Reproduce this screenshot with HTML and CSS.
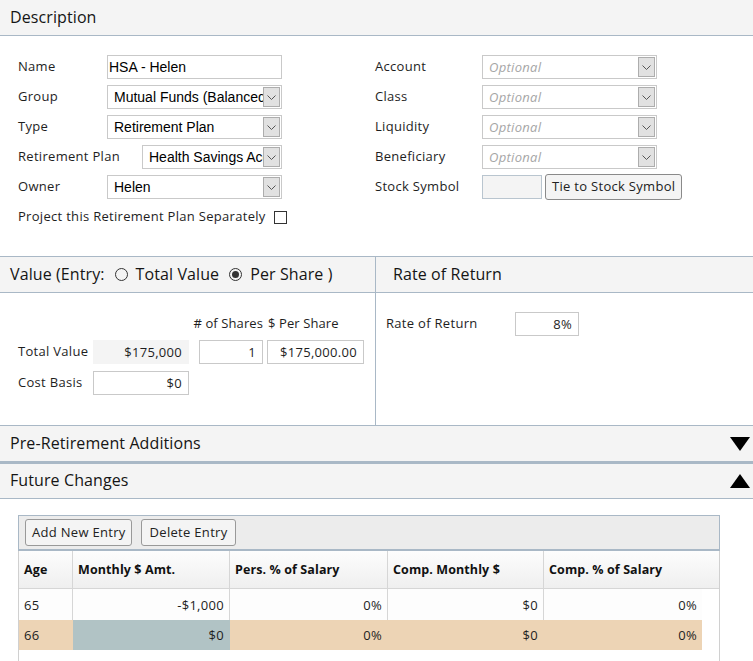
FILE: index.html
```html
<!DOCTYPE html>
<html>
<head>
<meta charset="utf-8">
<link rel="stylesheet" href="styles.css">
</head>
<body>
<div class="page">
  <div class="bar bar-first"><span class="bar-title">Description</span></div>
  <div class="desc">
    <div class="col col-left">
      <div class="row"><span class="lbl">Name</span><div class="field text-field">HSA - Helen</div></div>
      <div class="row"><span class="lbl">Group</span><div class="field select"><span class="val">Mutual Funds (Balanced)</span><span class="dd"><svg width="9" height="5" viewBox="0 0 9 5"><path d="M0.5 0.5 L4.5 4.5 L8.5 0.5" fill="none" stroke="#555" stroke-width="1"/></svg></span></div></div>
      <div class="row"><span class="lbl">Type</span><div class="field select"><span class="val">Retirement Plan</span><span class="dd"><svg width="9" height="5" viewBox="0 0 9 5"><path d="M0.5 0.5 L4.5 4.5 L8.5 0.5" fill="none" stroke="#555" stroke-width="1"/></svg></span></div></div>
      <div class="row row-fixed"><span class="lbl-plain">Retirement Plan</span><div class="field select select-short"><span class="val">Health Savings Account</span><span class="dd"><svg width="9" height="5" viewBox="0 0 9 5"><path d="M0.5 0.5 L4.5 4.5 L8.5 0.5" fill="none" stroke="#555" stroke-width="1"/></svg></span></div></div>
      <div class="row"><span class="lbl">Owner</span><div class="field select"><span class="val">Helen</span><span class="dd"><svg width="9" height="5" viewBox="0 0 9 5"><path d="M0.5 0.5 L4.5 4.5 L8.5 0.5" fill="none" stroke="#555" stroke-width="1"/></svg></span></div></div>
      <div class="row"><span class="lbl-plain lbl-check">Project this Retirement Plan Separately</span><span class="checkbox"></span></div>
    </div>
    <div class="col col-right">
      <div class="row"><span class="lbl lbl-r">Account</span><div class="field select"><span class="val placeholder">Optional</span><span class="dd"><svg width="9" height="5" viewBox="0 0 9 5"><path d="M0.5 0.5 L4.5 4.5 L8.5 0.5" fill="none" stroke="#555" stroke-width="1"/></svg></span></div></div>
      <div class="row"><span class="lbl lbl-r">Class</span><div class="field select"><span class="val placeholder">Optional</span><span class="dd"><svg width="9" height="5" viewBox="0 0 9 5"><path d="M0.5 0.5 L4.5 4.5 L8.5 0.5" fill="none" stroke="#555" stroke-width="1"/></svg></span></div></div>
      <div class="row"><span class="lbl lbl-r">Liquidity</span><div class="field select"><span class="val placeholder">Optional</span><span class="dd"><svg width="9" height="5" viewBox="0 0 9 5"><path d="M0.5 0.5 L4.5 4.5 L8.5 0.5" fill="none" stroke="#555" stroke-width="1"/></svg></span></div></div>
      <div class="row"><span class="lbl lbl-r">Beneficiary</span><div class="field select"><span class="val placeholder">Optional</span><span class="dd"><svg width="9" height="5" viewBox="0 0 9 5"><path d="M0.5 0.5 L4.5 4.5 L8.5 0.5" fill="none" stroke="#555" stroke-width="1"/></svg></span></div></div>
      <div class="row"><span class="lbl lbl-r">Stock Symbol</span><div class="symbol-box"></div><span class="btn btn-tie">Tie to Stock Symbol</span></div>
    </div>
  </div>

  <div class="split">
    <div class="pane pane-value">
      <div class="bar bar-top"><span class="bar-title"><span>Value (Entry:</span><span class="radio"></span><span>Total Value</span><span class="radio radio-on"></span><span>Per Share )</span></span></div>
      <div class="value-body">
        <span></span><span></span><span class="colhead ch-right"># of Shares</span><span class="colhead ch-left">$ Per Share</span>
        <span class="vlbl">Total Value</span><span class="num-box readonly">$175,000</span><span class="cell-r"><span class="num-box w64">1</span></span><span class="cell-r"><span class="num-box w97">$175,000.00</span></span>
        <span class="vlbl">Cost Basis</span><span class="num-box">$0</span><span></span><span></span>
      </div>
    </div>
    <div class="pane pane-rate">
      <div class="bar bar-top"><span class="bar-title bar-title-rate">Rate of Return</span></div>
      <div class="rate-body">
        <span class="rlbl">Rate of Return</span><span class="num-box w64">8%</span>
      </div>
    </div>
  </div>

  <div class="bar bar-pre"><span class="bar-title">Pre-Retirement Additions</span>
    <svg class="tri" width="20" height="14" viewBox="0 0 20 14"><polygon points="0,0 20,0 10,14" fill="#000"/></svg></div>
  <div class="bar bar-future"><span class="bar-title">Future Changes</span>
    <svg class="tri" width="20" height="14" viewBox="0 0 20 14"><polygon points="10,0 20,14 0,14" fill="#000"/></svg></div>

  <div class="grid-area">
    <div class="grid">
      <div class="toolbar"><span class="btn">Add New Entry</span><span class="btn btn-del">Delete Entry</span></div>
      <div class="ghead">
        <span class="gh">Age</span><span class="gh">Monthly $ Amt.</span><span class="gh">Pers. % of Salary</span><span class="gh">Comp. Monthly $</span><span class="gh gh-last">Comp. % of Salary</span>
      </div>
      <div class="grow">
        <span class="gc gc-l">65</span><span class="gc">-$1,000</span><span class="gc">0%</span><span class="gc">$0</span><span class="gc">0%</span>
      </div>
      <div class="grow grow-sel">
        <span class="gc gc-l">66</span><span class="gc gc-active">$0</span><span class="gc">0%</span><span class="gc">$0</span><span class="gc">0%</span>
      </div>
    </div>
  </div>
</div>
</body>
</html>
```
FILE: styles.css
```css
* { box-sizing: border-box; }
html, body { margin: 0; padding: 0; background: #fff; }
body {
  font-family: "Open Sans", Lato, sans-serif;
  font-size: 13px;
  letter-spacing: 0.3px;
  color: #1e1e1e;
}
.page { width: 753px; height: 661px; overflow: hidden; }

.bar {
  background: #f4f4f4;
  display: flex;
  align-items: center;
  justify-content: space-between;
  padding: 0 3px 0 10px;
  height: 36px;
  border-bottom: 1px solid #a9b8c6;
}
.bar-title {
  font-size: 16px;
  font-weight: 500;
  letter-spacing: 0.1px;
  color: #151515;
  display: inline-flex;
  align-items: center;
  white-space: nowrap;
  padding-bottom: 2px;
}
.bar-title-rate { padding-left: 7px; }

.desc { display: flex; padding: 19px 0 27px 0; }
.col { display: flex; flex-direction: column; gap: 6px; }
.col-left { width: 357px; margin-left: 18px; }
.col-right { flex: 1; }
.row { display: flex; align-items: center; height: 24px; }
.row-fixed { width: 264px; justify-content: space-between; }
.lbl, .lbl-plain { padding-bottom: 2px; }
.lbl { width: 89px; flex: none; }
.lbl-r { width: 107px; }
.lbl-check { margin-right: 8px; }

.field {
  height: 24px;
  width: 175px;
  border: 1px solid #c9c9c9;
  background: #fff;
  display: flex;
  align-items: center;
  font-family: "Liberation Sans", Arial, sans-serif;
  font-size: 14px;
  letter-spacing: 0;
  color: #000;
}
.text-field { padding-left: 1px; }
.select { padding: 1px 1px 1px 6px; }
.select-short { width: 140px; }
.val { flex: 1; overflow: hidden; white-space: nowrap; }
.placeholder { font-family: "Open Sans", sans-serif; font-style: italic; color: #a6a6a6; font-size: 13px; letter-spacing: 0.3px; }
.dd {
  flex: none;
  width: 17px;
  height: 100%;
  background: #e1e1e1;
  border: 1px solid #adadad;
  display: flex;
  align-items: center;
  justify-content: center;
}
.checkbox {
  width: 13px; height: 13px;
  border: 1px solid #333;
  background: #fff;
  display: inline-block;
}
.symbol-box {
  width: 60px; height: 24px;
  background: #f4f4f4;
  border: 1px solid #b9c5cf;
}
.btn {
  display: inline-flex;
  align-items: center;
  height: 27px;
  padding: 0 6px 2px;
  border: 1px solid #8a8a8a;
  border-radius: 3px;
  background: #f4f4f4;
  color: #222;
  font-size: 13px;
  white-space: nowrap;
}
.btn-tie { margin-left: 3px; height: 26px; }

.split { display: flex; border-top: 1px solid #a9b8c6; border-bottom: 1px solid #a9b8c6; }
.pane-value { width: 376px; border-right: 1px solid #a9b8c6; }
.pane-rate { flex: 1; }
.bar-top { height: 36px; }
.radio {
  width: 13px; height: 13px;
  border: 1px solid #333;
  border-radius: 50%;
  display: inline-flex;
  align-items: center;
  justify-content: center;
  margin: 2px 8px 0 10px;
  flex: none;
}
.radio-on::after {
  content: "";
  width: 7px; height: 7px;
  border-radius: 50%;
  background: #333;
}
.value-body {
  height: 132px;
  display: grid;
  grid-template-columns: 75px 96px 74px 101px;
  grid-template-rows: 19px 24px 24px;
  row-gap: 7px;
  align-items: center;
  padding: 21px 0 0 18px;
}
.colhead { white-space: nowrap; letter-spacing: 0.1px; padding-bottom: 2px; }
.vlbl, .rlbl { padding-bottom: 2px; }
.ch-right { text-align: right; }
.ch-left { padding-left: 5px; }
.num-box {
  height: 24px;
  border: 1px solid #c9c9c9;
  display: flex;
  align-items: center;
  justify-content: flex-end;
  padding-right: 6px;
  background: #fff;
}
.readonly { background: #f4f4f4; border-color: #f4f4f4; }
.cell-r { display: flex; justify-content: flex-end; }
.w64 { width: 64px; }
.w97 { width: 97px; }
.rate-body {
  display: flex;
  align-items: center;
  padding: 19px 0 0 10px;
}
.rlbl { width: 129px; }

.bar-pre { height: 38px; border-bottom: 3px solid #a9b8c6; }
.bar-future { height: 35px; }
.tri { display: block; }

.grid-area { padding: 16px 0 0 18px; }
.grid {
  width: 702px;
  height: 160px;
  border-left: 1px solid #d0d0d0;
  border-right: 1px solid #d0d0d0;
}
.toolbar {
  height: 36px;
  background: #ececec;
  border: 1px solid #a9b8c6;
  border-bottom: 2px solid #a9b8c6;
  margin: 0 -1px;
  display: flex;
  align-items: center;
  gap: 9px;
  padding: 0 6px;
}
.toolbar .btn { height: 27px; padding: 0 5px 2px 6px; border-color: #999; }
.toolbar .btn-del { padding: 0 7px 2px 8px; }

.ghead {
  display: grid;
  grid-template-columns: 54px 157px 158px 156px 1fr;
  height: 38px;
  background: linear-gradient(#fdfdfd, #efefef);
  border-bottom: 1px solid #d6d6d6;
}
.gh {
  display: flex;
  align-items: center;
  padding-left: 5px;
  font-weight: bold;
  font-size: 12.5px;
  letter-spacing: 0.1px;
  color: #111;
  border-right: 1px solid #d6d6d6;
}
.gh-last { border-right: none; }
.grow {
  display: grid;
  grid-template-columns: 54px 157px 158px 156px 158px;
  width: 683px;
  height: 31px;
  background: #fdfdfd;
}
.grow + .grow { height: 30px; }
.gc {
  display: flex;
  align-items: center;
  justify-content: flex-end;
  padding-right: 5px;
  border-right: 1px solid #d6d6d6;
}
.gc:last-child { border-right: none; }
.gc-l { justify-content: flex-start; padding-left: 5px; }
.grow-sel { background: #edd4b5; }
.grow-sel .gc { border-right-color: transparent; }
.gc-active { background: #b1c3c5; }
```
